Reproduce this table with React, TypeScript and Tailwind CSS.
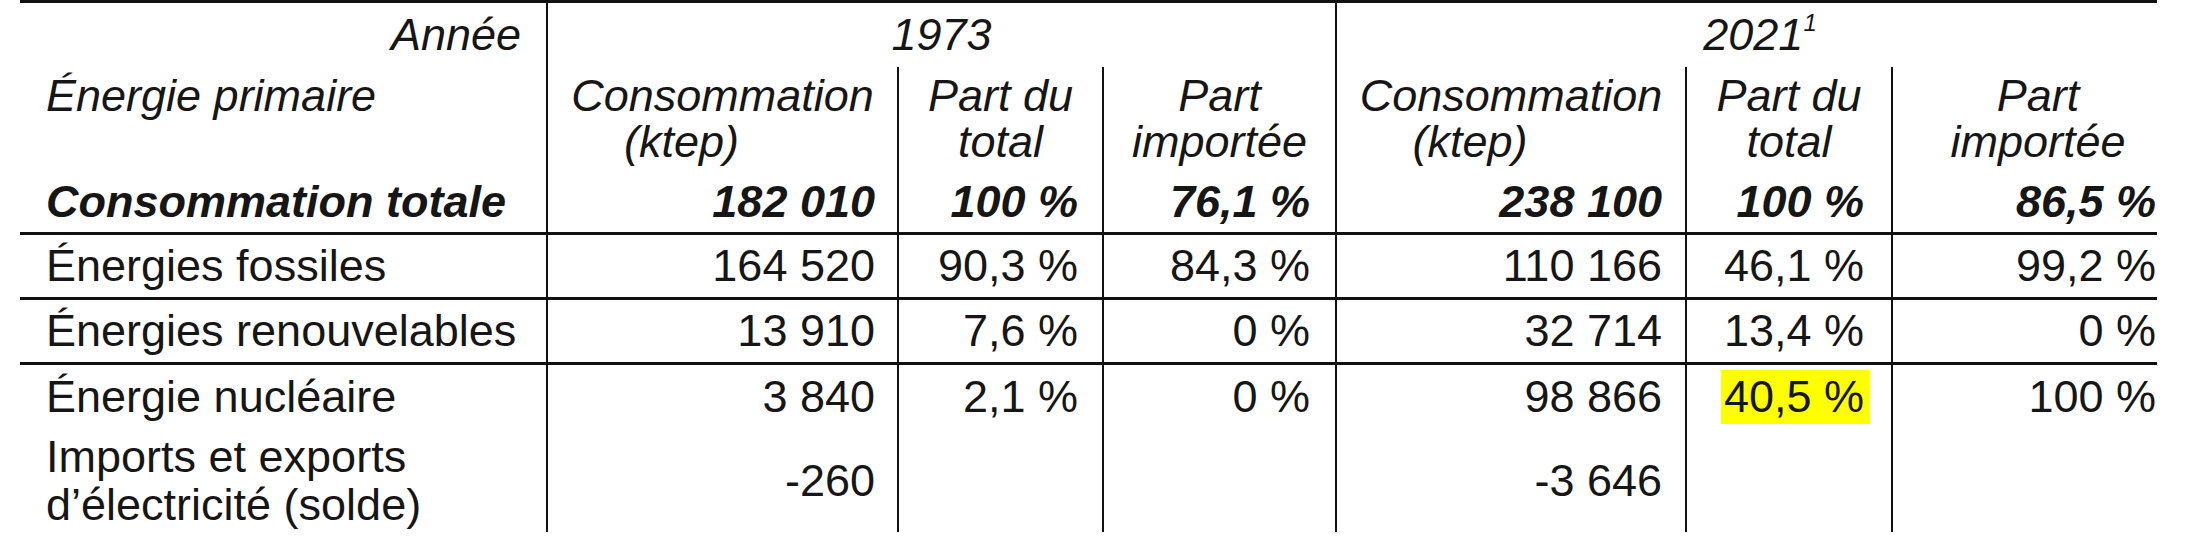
import { FC } from 'react';

type Row = {
  label: string[];
  values: string[];
  tall?: boolean;
  highlight?: number;
  line?: boolean;
};

const rows: Row[] = [
  { label: ['Énergies fossiles'], values: ['164 520', '90,3 %', '84,3 %', '110 166', '46,1 %', '99,2 %'], line: true },
  { label: ['Énergies renouvelables'], values: ['13 910', '7,6 %', '0 %', '32 714', '13,4 %', '0 %'], line: true },
  { label: ['Énergie nucléaire'], values: ['3 840', '2,1 %', '0 %', '98 866', '40,5 %', '100 %'], highlight: 4 },
  { label: ['Imports et exports', 'd’électricité (solde)'], values: ['-260', '', '', '-3 646', '', ''], tall: true },
];

// right padding for each value column, measured on the reference
const padR = ['pr-[22px]', 'pr-[24px]', 'pr-[25px]', 'pr-[23px]', 'pr-[27px]', 'pr-[27px]'];
const sideLine = [
  'border-l-2 border-l-[#111]',
  'border-l-2 border-l-[#111]',
  'border-l-2 border-l-[#111]',
  'border-l-2 border-l-[#111]',
  'border-l-2 border-l-[#111]',
  'border-l-2 border-l-[#111]',
];

const App: FC = () => {
  return (
    <div
      className="min-h-screen w-[2200px] bg-white text-[#161616] text-[45px] leading-[48px]"
      style={{ fontFamily: '"Liberation Sans", Arial, sans-serif' }}
    >
      <div className="ml-[20px] w-[2137px] overflow-hidden">
        <table className="table-fixed border-collapse w-[2163px]">
          <colgroup>
            <col className="w-[527px]" />
            <col className="w-[351px]" />
            <col className="w-[205px]" />
            <col className="w-[233px]" />
            <col className="w-[350px]" />
            <col className="w-[206px]" />
            <col className="w-[291px]" />
          </colgroup>
          <thead>
            {/* Years */}
            <tr className="h-[65px] border-t-[3px] border-t-[#111] italic">
              <td className="text-right pr-[25px] align-middle">Année</td>
              <td colSpan={3} className="text-center align-middle border-l-2 border-l-[#111]">1973</td>
              <td colSpan={3} className="text-center align-middle border-l-2 border-l-[#111]">
                2021<sup className="text-[24px] align-top top-0 relative leading-none">1</sup>
              </td>
            </tr>
            {/* Column titles */}
            <tr className="h-[106px] italic leading-[46px]">
              <td className="align-top pt-[6px] pl-[26px]">Énergie primaire</td>
              <td className="align-top pt-[6px] text-center border-l-2 border-l-[#111]">
                <div>Consommation</div>
                <div className="pr-[82px]">(ktep)</div>
              </td>
              <td className="align-top pt-[6px] text-center border-l-2 border-l-[#111]">
                <div>Part du</div>
                <div>total</div>
              </td>
              <td className="align-top pt-[6px] text-center border-l-2 border-l-[#111]">
                <div>Part</div>
                <div>importée</div>
              </td>
              <td className="align-top pt-[6px] text-center border-l-2 border-l-[#111]">
                <div>Consommation</div>
                <div className="pr-[82px]">(ktep)</div>
              </td>
              <td className="align-top pt-[6px] text-center border-l-2 border-l-[#111]">
                <div>Part du</div>
                <div>total</div>
              </td>
              <td className="align-top pt-[6px] text-center border-l-2 border-l-[#111]">
                <div>Part</div>
                <div>importée</div>
              </td>
            </tr>
            {/* Total */}
            <tr className="h-[61px] font-bold italic border-b-[3px] border-b-[#111]">
              <td className="pl-[26px] align-middle whitespace-nowrap">Consommation totale</td>
              {['182 010', '100 %', '76,1 %', '238 100', '100 %', '86,5 %'].map((v, i) => (
                <td key={i} className={`text-right align-middle whitespace-nowrap ${padR[i]} ${sideLine[i]}`}>
                  {v}
                </td>
              ))}
            </tr>
          </thead>
          <tbody>
            {rows.map((row, r) => (
              <tr
                key={r}
                className={`${row.tall ? 'h-[102px]' : r === 2 ? 'h-[66px]' : 'h-[65px]'} ${row.line ? 'border-b-[3px] border-b-[#111]' : ''}`}
              >
                <td className="pl-[26px] align-middle whitespace-nowrap">
                  {row.label.map((l) => (
                    <div key={l}>{l}</div>
                  ))}
                </td>
                {row.values.map((v, i) => (
                  <td key={i} className={`text-right align-middle whitespace-nowrap ${padR[i]} ${sideLine[i]}`}>
                    {row.highlight === i ? (
                      <span className="inline-block bg-[#ffff00] leading-[54px] pl-[3px] pr-[6px] -mr-[6px]">{v}</span>
                    ) : (
                      v
                    )}
                  </td>
                ))}
              </tr>
            ))}
          </tbody>
        </table>
      </div>
    </div>
  );
};

export default App;
